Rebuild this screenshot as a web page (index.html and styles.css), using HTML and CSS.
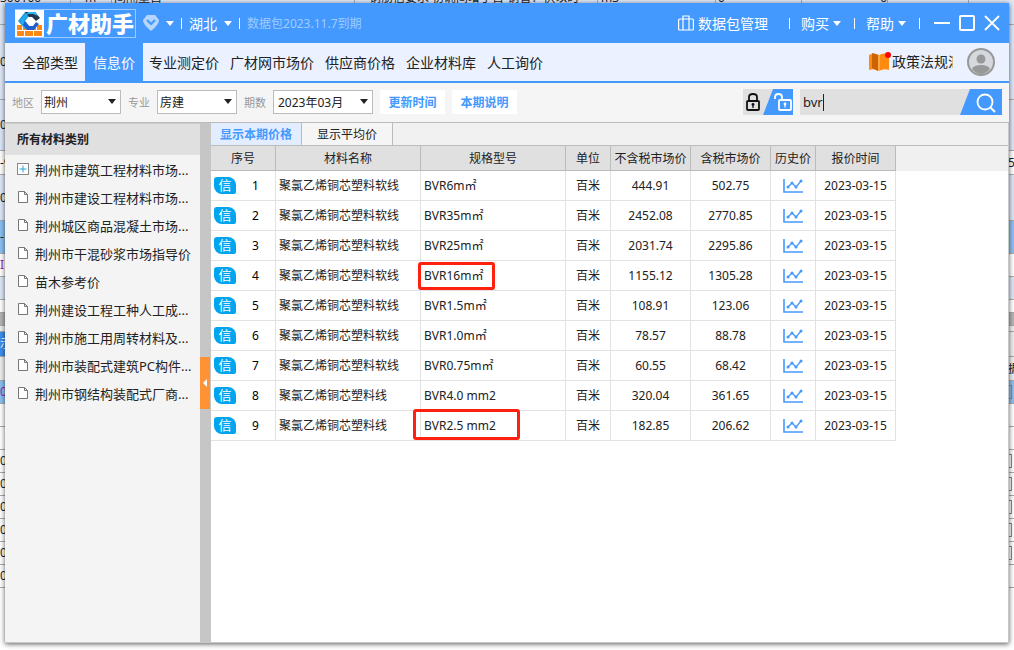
FILE: index.html
```html
<!DOCTYPE html>
<html lang="zh-CN">
<head>
<meta charset="utf-8">
<title>广材助手</title>
<link rel="stylesheet" href="styles.css">
</head>
<body>
<div class="desktop">
  <div class="backdrop" aria-hidden="true">
    <div class="sheet-top">
      <span class="c1">300100</span><span class="c2">m</span><span class="c3">间隔量自</span><span class="c4">钢筋信要求 初确间增丁百 钢管：伏以时</span><span class="c5">m3</span><span class="c6">0</span><span class="c7">0</span><span class="c8"></span>
    </div>
    <div class="strip blue h22"></div>
    <div class="strip blue h75"><span>0</span></div>
    <div class="strip blue h51"><span>0</span></div>
    <div class="strip h24"><span>-9</span><span>56</span></div>
    <div class="strip blue h46"><span>0</span></div>
    <div class="strip sky h33"><span>-1</span></div>
    <div class="strip h23"><span class="purple">I</span></div>
    <div class="strip blue h23"></div>
    <div class="strip h13"></div>
    <div class="strip dark h13"></div>
    <div class="strip pale h6"></div>
    <div class="strip pale h25"><span class="chip">示</span></div>
    <div class="strip pale h24"><span></span><span>据</span></div>
    <div class="strip sky h23"><span class="purple">0</span><span class="bracket"></span></div>
    <div class="strip h23"></div>
    <div class="strip h23"></div>
    <div class="strip h23"><span>0</span><span class="bracket"></span></div>
    <div class="strip h23"><span>0</span><span class="bracket"></span></div>
    <div class="strip h23"><span>0</span><span class="bracket"></span></div>
    <div class="strip h23"><span>0</span><span class="bracket"></span></div>
    <div class="strip h23"><span>0</span><span class="bracket"></span></div>
    <div class="strip h23"><span>0</span></div>
  </div>

  <div class="window">
    <header class="titlebar">
      <div class="brand">
        <svg class="brand-mark" viewBox="0 0 29 27" width="29" height="27" aria-hidden="true">
          <rect width="29" height="27" fill="#fff"/>
          <path d="M2 15h5v5H2zM22 15h5v5h-5zM2 21h7v5H2zM10 21h8v5h-8zM19 21h8v5h-8zM8 16l5 4H8zM21 15v5h-7l4-1z" fill="#ff8812"/>
          <path d="M10 2 3 11l7 8 5-2-5-6 5-6z" fill="#1f9fe4"/>
          <path d="M10 2h10l5 6-4 3-4-4h-3z" fill="#22384f"/>
          <path d="M13 2h7l3 4-5-2h-5L8 11l4 7-2 1-4-8z" fill="#29b0ee"/>
          <path d="m10 11 4 5h4l3-4 3 2-5 6h-7l-4-5z" fill="#1f60d0"/>
        </svg>
        <span class="brand-name">广材助手</span>
      </div>
      <button class="plain" aria-label="会员">
        <svg viewBox="0 0 16 16" width="16" height="16"><path d="M4 0h8l4 5c0 3-3 7-8 11C3 12 0 8 0 5z" fill="#b4d6ff"/><path d="m4 5 4 4 4-4" fill="none" stroke="#4499ff" stroke-width="2.2"/></svg>
        <i class="caret"></i>
      </button>
      <i class="sep"></i>
      <button class="plain">湖北<i class="caret"></i></button>
      <i class="sep"></i>
      <span class="expiry">数据包2023.11.7到期</span>
      <div class="title-tools">
        <button class="plain tight">
          <svg viewBox="0 0 16 16" width="16" height="16" fill="none" stroke="#fff" stroke-width="1.2"><rect x=".6" y="4" width="14.8" height="11" rx="1"/><path d="M5 15V1h6v14"/></svg>数据包管理</button>
        <i class="sep wide"></i>
        <button class="plain tight">购买<i class="caret"></i></button>
        <i class="sep"></i>
        <button class="plain tight">帮助<i class="caret"></i></button>
        <i class="sep"></i>
        <div class="controls">
          <button class="plain" aria-label="最小化"><svg viewBox="0 0 16 16" width="16" height="16"><path d="M0 8h16" stroke="#fff" stroke-width="2"/></svg></button>
          <button class="plain" aria-label="最大化"><svg viewBox="0 0 16 16" width="16" height="16"><rect x="1" y="1" width="14" height="14" rx="1" fill="none" stroke="#fff" stroke-width="2"/></svg></button>
          <button class="plain" aria-label="关闭"><svg viewBox="0 0 16 16" width="16" height="16"><path d="m1 1 14 14M15 1 1 15" stroke="#fff" stroke-width="1.8"/></svg></button>
        </div>
      </div>
    </header>

    <nav class="nav">
      <a href="#">全部类型</a>
      <a href="#" class="active">信息价</a>
      <a href="#">专业测定价</a>
      <a href="#">广材网市场价</a>
      <a href="#">供应商价格</a>
      <a href="#">企业材料库</a>
      <a href="#">人工询价</a>
      <div class="nav-right">
        <svg viewBox="0 0 22 20" width="22" height="20" aria-hidden="true"><path d="M0 3q5-3 10 0 5-3 10 0v15q-5-2-10 1-5-3-10-1z" fill="#ff8a12"/><path d="M3 1 9 3v16l-6-3z" fill="#c96400"/><path d="M10 3v16" stroke="#ffc078"/><circle cx="19" cy="3" r="3" fill="#f00"/></svg>
        <a href="#" class="policy">政策法规汇编</a>
        <svg class="avatar" viewBox="0 0 28 28" width="28" height="28" role="img" aria-label="用户"><circle cx="14" cy="14" r="13" fill="#d5d8dd" stroke="#989898" stroke-width="2"/><circle cx="14" cy="11" r="4.5" fill="#989898"/><path d="M5 21q2-4 9-4t9 4q-4 5-9 5t-9-5z" fill="#989898"/></svg>
      </div>
    </nav>

    <form class="filters">
      <label for="area">地区</label>
      <span class="select"><select id="area"><option>荆州</option></select></span>
      <label for="major">专业</label>
      <span class="select"><select id="major"><option>房建</option></select></span>
      <label for="period">期数</label>
      <span class="select long"><select id="period"><option>2023年03月</option></select></span>
      <button type="button" class="action">更新时间</button>
      <button type="button" class="action">本期说明</button>
      <div class="search-area">
        <button type="button" class="lock" aria-label="锁定">
          <svg viewBox="0 0 50 26" width="50" height="26"><path d="M0 0h50v26H0z" fill="#e0e0e0"/><path d="M30 0h20v26H20z" fill="#4499ff"/><rect x="4" y="12" width="12" height="9" rx="1" fill="#e0e0e0" stroke="#111" stroke-width="1.8"/><path d="M6 12V8q0-3 4-3t4 3v4" fill="none" stroke="#111" stroke-width="1.8"/><circle cx="10" cy="15.500" r="1.400" fill="#111"/><path d="M10 15v4" stroke="#111" stroke-width="1.3"/><rect x="36" y="11" width="12" height="10" rx="1" fill="none" stroke="#fff" stroke-width="1.8"/><path d="M32 10V8q0-3 3.500-3T39 8v3" fill="none" stroke="#fff" stroke-width="1.8"/><circle cx="42" cy="15" r="1.400" fill="#fff"/><path d="M42 15v3.500" stroke="#fff" stroke-width="1.2"/></svg>
        </button>
        <div class="search">
          <div class="search-field"><input type="text" id="q" aria-label="搜索" value="bvr" size="3"><i class="cursor"></i></div>
          <button type="button" class="go" aria-label="搜索">
            <svg viewBox="0 0 42 26" width="42" height="26"><path d="M10 0h32v26H0z" fill="#4499ff"/><circle cx="25" cy="13" r="7.500" fill="none" stroke="#fff" stroke-width="1.8"/><path d="m30 18 5 5" stroke="#fff" stroke-width="2"/></svg>
          </button>
        </div>
      </div>
    </form>

    <div class="main">
      <aside class="sidebar">
        <h2>所有材料类别</h2>
        <ul id="tree"></ul>
      </aside>
      <div class="splitter"><button aria-label="收起"></button></div>
      <section class="content">
        <div class="tabs"><button class="on">显示本期价格</button><button>显示平均价</button></div>
        <table>
          <colgroup><col class="w65"><col class="w145"><col class="w145"><col class="w45"><col class="w80"><col class="w80"><col class="w45"><col class="w80"><col></colgroup>
          <thead><tr><th>序号</th><th>材料名称</th><th>规格型号</th><th>单位</th><th>不含税市场价</th><th>含税市场价</th><th>历史价</th><th>报价时间</th><td class="rest"></td></tr></thead>
          <tbody id="rows"></tbody>
        </table>
      </section>
    </div>
  </div>
</div>
<script src="app.js"></script>
</body>
</html>
```

FILE: styles.css
```css
* { box-sizing: border-box; }

body {
  margin: 0;
  font-family: "Noto Sans", "Noto Sans CJK SC", sans-serif;
  font-size: 12px;
  color: #222;
}

button, input, select { font: inherit; color: inherit; }
button { border: 0; padding: 0; background: none; cursor: pointer; }
a { color: inherit; text-decoration: none; }
svg { display: block; flex: none; }

.desktop {
  position: relative;
  display: flex;
  min-height: 100vh;
  padding: 3px 5px 7px;
  overflow: hidden;
}

/* spreadsheet behind the window */
.backdrop { position: absolute; inset: 0; overflow: hidden; background: #fff; }
.sheet-top {
  display: flex;
  align-items: flex-end;
  height: 3px;
  overflow: hidden;
  background: #dde7f8;
  line-height: 10px;
  white-space: nowrap;
}
.sheet-top span { height: 10px; border-right: 1px solid #aaa; }
.c1 { width: 71px; }
.c2 { width: 41px; padding-left: 14px; }
.c3 { width: 243px; padding-left: 2px; }
.c4 { width: 243px; padding-left: 14px; }
.c5 { width: 118px; padding-left: 3px; }
.c6 { width: 86px; padding-left: 2px; }
.c7 { width: 86px; text-align: right; }
.c8 { width: 81px; }
.strip {
  display: flex;
  align-items: center;
  justify-content: space-between;
  border-bottom: 1px solid #aaa;
  line-height: 12px;
}
.strip span { width: 6px; overflow: hidden; white-space: nowrap; }
.strip .bracket { height: 14px; width: 6px; border: solid #888; border-width: 1px 1px 1px 0; margin-right: 2px; }
.strip .chip { height: 24px; line-height: 24px; background: #3d8eed; color: #fff; }
.strip .purple { color: #a020b0; }
.blue { background: #dde7f8; }
.sky { background: #8cc0f0; }
.pale { background: #eee; }
.dark { background: #b4b4b4; }
.h6 { height: 6px; }
.h13 { height: 13px; }
.h22 { height: 22px; }
.h23 { height: 23px; }
.h24 { height: 24px; }
.h25 { height: 25px; }
.h33 { height: 33px; }
.h46 { height: 46px; }
.h51 { height: 51px; }
.h75 { height: 75px; }

.window {
  position: relative;
  display: flex;
  flex: 1;
  flex-direction: column;
  min-width: 0;
  background: #f5f5f5;
  box-shadow: 0 1px 5px rgba(0, 0, 0, .65);
}

/* title bar */
.titlebar {
  display: flex;
  align-items: center;
  gap: 7px;
  height: 40px;
  padding: 0 9px 0 10px;
  background: #4499ff;
  color: #fff;
  font-size: 14px;
}
.brand { display: flex; border: 1px solid #9dcaff; border-left: 0; }
.brand-name {
  padding: 0 1px 0 2px;
  font-size: 22px;
  line-height: 26px;
  height: 27px;
  font-weight: 900;
}
.plain { display: flex; align-items: center; gap: 7px; white-space: nowrap; }
.plain.tight { gap: 4px; }
.caret {
  width: 8px;
  border: 4px solid transparent;
  border-top: 5px solid #fff;
  border-bottom: 0;
}
.sep { width: 1px; height: 11px; background: #fff; }
.expiry { color: #9fccff; font-size: 12px; }
.title-tools { display: flex; align-items: center; gap: 11px; margin-left: auto; }
.title-tools .sep { margin-left: 2px; }
.title-tools .wide { margin-left: 10px; }
.controls { display: flex; gap: 9px; margin-left: 3px; }

/* navigation */
.nav {
  display: flex;
  align-items: stretch;
  height: 40px;
  padding: 0 14px 0 11px;
  border-bottom: 2px solid #4499ff;
  background: #ebf1ff;
  font-size: 14px;
  line-height: 40px;
  white-space: nowrap;
}
.nav > a { padding: 0 5px 0 6px; }
.nav > a.active { margin-left: 2px; padding: 0 8px; background: #4499ff; color: #fff; }
.nav-right { display: flex; align-items: center; margin-left: auto; }
.policy { width: 61px; margin-left: 1px; overflow: hidden; }
.avatar { margin-left: 14px; }

/* filters */
.filters {
  display: flex;
  align-items: center;
  gap: 7px;
  height: 40px;
  padding: 0 7px 1px;
  border-bottom: 1px solid #bbb;
}
.filters label { color: #999; font-size: 11px; }
.select { position: relative; width: 80px; }
.select.long { width: 100px; }
.select::after {
  content: "";
  position: absolute;
  right: 5px;
  top: 9px;
  border: 4px solid transparent;
  border-top: 5px solid #222;
  border-bottom: 0;
  pointer-events: none;
}
.select select {
  display: block;
  width: 100%;
  height: 24px;
  padding: 0 2px;
  border: 1px solid #bbb;
  border-radius: 0;
  background: #fff;
  appearance: none;
}
.select.long select { padding: 0 4px; }
.action { width: 65px; height: 24px; background: #fff; color: #4499ff; font-weight: 700; }
.search-area { display: flex; gap: 7px; margin-left: auto; }
.search { display: flex; width: 202px; background: #e0e0e0; }
.search-field { display: flex; flex: 1; align-items: center; padding-left: 3px; font-size: 13px; }
.search-field input { width: 20px; padding: 0; border: 0; background: none; outline: 0; }
.cursor { width: 1px; height: 17px; background: #222; }

/* body */
.main { display: flex; flex: 1; border: solid #c8c8c8; border-width: 0 1px 1px 0; }
.sidebar { width: 195px; background: #f4f4f4; border-top: 1px solid #ccc; }
.sidebar h2 {
  margin: 0;
  padding-left: 12px;
  background: #e0e0e0;
  font-size: 12px;
  line-height: 31px;
}
.sidebar ul { margin: 0; padding: 0; list-style: none; }
.sidebar li { display: flex; align-items: center; gap: 6px; height: 28px; padding-left: 12px; font-size: 13px; white-space: nowrap; }
.splitter { display: flex; align-items: center; width: 11px; background: #c6c6c6; }
.splitter button { display: flex; align-items: center; justify-content: center; width: 10px; height: 52px; background: #ff9235; }
.splitter button::before {
  content: "";
  border: 4px solid transparent;
  border-right-color: #fff;
  border-left: 0;
}
.content { flex: 1; min-width: 0; background: #fff; }
.tabs { display: flex; height: 22px; background: #f1f1f1; }
.tabs button { padding: 0 15px; border-right: 1px solid #bbb; background: #f5f5f5; }
.tabs .on { padding: 0 9px; background: #e2eeff; color: #4499ff; font-weight: 700; }

table { width: 100%; border-collapse: separate; border-spacing: 0; table-layout: fixed; }
.w45 { width: 45px; }
.w65 { width: 65px; }
.w80 { width: 80px; }
.w145 { width: 145px; }
th {
  height: 26px;
  padding: 0;
  border: solid #bbb;
  border-width: 1px 1px 1px 0;
  background: #e0e0e0;
  font-weight: 400;
  white-space: nowrap;
}
td {
  height: 30px;
  padding: 0;
  border: solid #e2e2e2;
  border-width: 0 1px 1px 0;
  line-height: 18px;
  text-align: center;
  white-space: nowrap;
}
td.rest { border: 0; }
thead td.rest { height: 26px; border-top: 1px solid #bbb; background: #f0f0f0; }
td.text { padding-left: 3px; text-align: left; }
td svg { margin: 0 auto; }
.no { display: flex; align-items: center; padding-left: 3px; }
.no span { flex: 1; color: #000; }
.badge {
  width: 22px;
  height: 17px;
  border-radius: 3px 8px 2px 8px;
  background: #00a5f0;
  color: #fff;
  font-size: 13px;
  font-style: normal;
  line-height: 16px;
}
.mark { position: relative; }
.mark::after {
  content: "";
  position: absolute;
  inset: -5px -12px -6px -6px;
  border: 3px solid #ff2010;
  border-radius: 3px;
}
.mark.big::after { inset: -8px -24px -6px -11px; }
```

FILE: app.js
```javascript
const plus = '<svg viewBox="0 0 12 12" width="12" height="12"><rect x=".5" y=".5" width="11" height="11" fill="#fff" stroke="#888"/><path d="M6 2.500v7M2.500 6h7" stroke="#22aadd"/></svg>';
const page = '<svg viewBox="0 0 12 12" width="12" height="12"><path d="M1.500.500h6l3 3v8h-9zM7.500.500v3h3" fill="#fff" stroke="#777"/></svg>';
const chart = '<svg viewBox="0 0 20 14" width="20" height="14"><path d="M1 0v13h19" fill="none" stroke="#4499ff" stroke-width="1.6"/><path d="m5 8 4-4 4 4 5-6" fill="none" stroke="#4499ff" stroke-width="1.3"/><g fill="#4499ff"><circle cx="5" cy="8" r="1.500"/><circle cx="9" cy="4" r="1.500"/><circle cx="13" cy="8" r="1.500"/><circle cx="18" cy="2" r="1.500"/></g></svg>';

const categories = [
  "荆州市建筑工程材料市场...",
  "荆州市建设工程材料市场...",
  "荆州城区商品混凝土市场...",
  "荆州市干混砂浆市场指导价",
  "苗木参考价",
  "荆州建设工程工种人工成...",
  "荆州市施工用周转材料及...",
  "荆州市装配式建筑PC构件...",
  "荆州市钢结构装配式厂商..."
];

const prices = [
  ["聚氯乙烯铜芯塑料软线", "BVR6m㎡", "444.91", "502.75"],
  ["聚氯乙烯铜芯塑料软线", "BVR35m㎡", "2452.08", "2770.85"],
  ["聚氯乙烯铜芯塑料软线", "BVR25m㎡", "2031.74", "2295.86"],
  ["聚氯乙烯铜芯塑料软线", "BVR16m㎡", "1155.12", "1305.28", "mark"],
  ["聚氯乙烯铜芯塑料软线", "BVR1.5m㎡", "108.91", "123.06"],
  ["聚氯乙烯铜芯塑料软线", "BVR1.0m㎡", "78.57", "88.78"],
  ["聚氯乙烯铜芯塑料软线", "BVR0.75m㎡", "60.55", "68.42"],
  ["聚氯乙烯铜芯塑料线", "BVR4.0 mm2", "320.04", "361.65"],
  ["聚氯乙烯铜芯塑料线", "BVR2.5 mm2", "182.85", "206.62", "mark big"]
];

document.getElementById("tree").innerHTML = categories
  .map((name, i) => `<li>${i ? page : plus}<span>${name}</span></li>`)
  .join("");

document.getElementById("rows").innerHTML = prices
  .map(([name, spec, net, gross, mark = ""], i) => `<tr>
    <td><div class="no"><i class="badge">信</i><span>${i + 1}</span></div></td>
    <td class="text">${name}</td>
    <td class="text"><span class="${mark}">${spec}</span></td>
    <td>百米</td><td>${net}</td><td>${gross}</td><td>${chart}</td><td>2023-03-15</td>
    <td class="rest"></td></tr>`)
  .join("");
```
